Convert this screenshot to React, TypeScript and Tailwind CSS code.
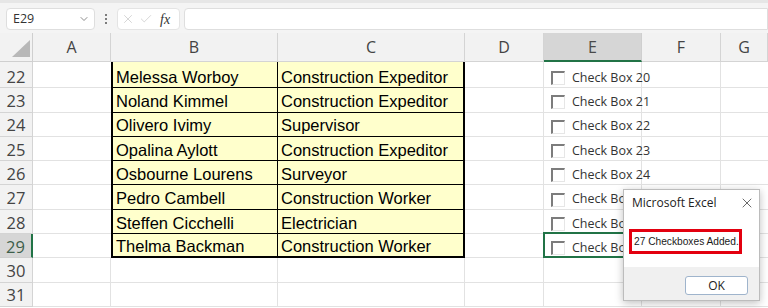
import { ChevronDown, X, Check } from 'lucide-react'

type Row = { n: number; name?: string; role?: string; cb?: string }

const rows: Row[] = [
  { n: 22, name: 'Melessa Worboy', role: 'Construction Expeditor', cb: 'Check Box 20' },
  { n: 23, name: 'Noland Kimmel', role: 'Construction Expeditor', cb: 'Check Box 21' },
  { n: 24, name: 'Olivero Ivimy', role: 'Supervisor', cb: 'Check Box 22' },
  { n: 25, name: 'Opalina Aylott', role: 'Construction Expeditor', cb: 'Check Box 23' },
  { n: 26, name: 'Osbourne Lourens', role: 'Surveyor', cb: 'Check Box 24' },
  { n: 27, name: 'Pedro Cambell', role: 'Construction Worker', cb: 'Check Box 25' },
  { n: 28, name: 'Steffen Cicchelli', role: 'Electrician', cb: 'Check Box 26' },
  { n: 29, name: 'Thelma Backman', role: 'Construction Worker', cb: 'Check Box 27' },
  { n: 30 },
  { n: 31 },
]

const cols = [
  { key: 'A', w: 'w-[78px]' },
  { key: 'B', w: 'w-[167px]' },
  { key: 'C', w: 'w-[187px]' },
  { key: 'D', w: 'w-[79px]' },
  { key: 'E', w: 'w-[98px]' },
  { key: 'F', w: 'w-[79px]' },
  { key: 'G', w: 'w-[47px]' },
]

function FormulaBar() {
  return (
    <div className="flex h-[33px] items-center gap-[4px] border-t-[3px] border-[#e6e6e6] bg-[#f4f4f4] pl-[6px] pt-[2px] font-['Open_Sans',sans-serif]">
      <div className="flex h-[22px] w-[89px] items-center justify-between rounded-[4px] border border-[#dedede] bg-white pl-[6px] pr-[4px] text-[12.5px] text-[#333]">
        <span>E29</span>
        <ChevronDown size={12} strokeWidth={1.5} className="text-[#666]" />
      </div>
      <div className="flex w-[14px] flex-col items-center gap-[2px]">
        <span className="h-[2px] w-[2px] rounded-full bg-[#555]" />
        <span className="h-[2px] w-[2px] rounded-full bg-[#555]" />
        <span className="h-[2px] w-[2px] rounded-full bg-[#555]" />
      </div>
      <div className="flex h-[22px] w-[63px] items-center gap-[4px] rounded-[4px] border border-[#e4e4e4] bg-white px-[3px]">
        <X size={14} strokeWidth={1.2} className="text-[#c4c4c4]" />
        <Check size={14} strokeWidth={1.2} className="text-[#c4c4c4]" />
        <span className="ml-[3px] font-['Liberation_Serif',serif] text-[14px] italic text-[#333]">fx</span>
      </div>
      <div className="h-[22px] flex-1 rounded-l-[4px] border border-[#dedede] bg-white" />
    </div>
  )
}

function CheckBoxCell({ label }: { label: string }) {
  return (
    <div className="flex items-center gap-[7px] whitespace-nowrap pl-[7px] font-['Open_Sans',sans-serif] text-[12.5px] text-[#333]">
      <span className="h-[14px] w-[14px] shrink-0 border-l-2 border-t-2 border-b border-r border-l-[#7c7c7c] border-t-[#7c7c7c] border-b-[#e6e6e6] border-r-[#e6e6e6] bg-white" />
      <span>{label}</span>
    </div>
  )
}

function HeaderRow() {
  return (
    <div className="flex h-[29px] font-['Open_Sans',sans-serif] text-[16px] text-[#444]">
      <div className="relative w-[33px] shrink-0 border-b border-r border-[#cfcfcf] bg-[#f2f2f2]">
        <svg className="absolute left-[12px] top-[7px]" width="18" height="17" viewBox="0 0 18 17">
          <polygon points="18,0 18,17 0,17" fill="#b8b8b8" />
        </svg>
      </div>
      {cols.map((c) => (
        <div
          key={c.key}
          className={
            c.key === 'E'
              ? `${c.w} flex shrink-0 items-center justify-center border-b-2 border-r border-b-[#217346] border-r-[#cfcfcf] bg-[#d6d6d6] text-[#4a4a4a]`
              : `${c.w} flex shrink-0 items-center justify-center border-b border-r border-[#d4d4d4] bg-[#f2f2f2]`
          }
        >
          {c.key}
        </div>
      ))}
    </div>
  )
}

// sliver of row 21 peeking out under the header
function PartialRow() {
  return (
    <div className="flex h-[2px]">
      <div className="w-[33px] shrink-0 border-r border-[#d4d4d4] bg-[#f2f2f2]" />
      <div className="w-[78px] shrink-0" />
      <div className="w-[167px] shrink-0 border-l-2 border-r border-black bg-[#ffffcc]" />
      <div className="w-[187px] shrink-0 border-r-2 border-black bg-[#ffffcc]" />
      <div className="w-[79px] shrink-0 border-r border-[#e2e2e2]" />
      <div className="w-[98px] shrink-0 border-r border-[#e2e2e2]" />
      <div className="w-[79px] shrink-0 border-r border-[#e2e2e2]" />
    </div>
  )
}

function DataRow({ row }: { row: Row }) {
  const selected = row.n === 29
  const last = row.n === 29
  const inTable = !!row.name
  const cellText = "font-['Liberation_Sans',Arial,sans-serif] text-[16.5px] text-black pt-[3px]"
  return (
    <div className="flex h-[24.3px]">
      <div
        className={
          selected
            ? "flex w-[33px] shrink-0 items-center justify-center border-b border-r-2 border-b-[#cfcfcf] border-r-[#217346] bg-[#d6d6d6] pt-[3px] font-['Open_Sans',sans-serif] text-[16.5px] text-[#3d5e4a]"
            : "flex w-[33px] shrink-0 items-center justify-center border-b border-r border-[#d4d4d4] bg-[#f2f2f2] pt-[3px] font-['Open_Sans',sans-serif] text-[16.5px] text-[#444]"
        }
      >
        {row.n}
      </div>
      <div className={`w-[78px] shrink-0 border-b border-[#e2e2e2] ${inTable ? '' : 'border-r'}`} />
      {inTable ? (
        <>
          <div
            className={`flex w-[167px] shrink-0 items-center whitespace-nowrap border-l-2 border-r border-black bg-[#ffffcc] pl-[3px] ${last ? 'border-b-2' : 'border-b'} ${cellText}`}
          >
            {row.name}
          </div>
          <div
            className={`flex w-[187px] shrink-0 items-center whitespace-nowrap border-r-2 border-black bg-[#ffffcc] pl-[3px] ${last ? 'border-b-2' : 'border-b'} ${cellText}`}
          >
            {row.role}
          </div>
        </>
      ) : (
        <>
          <div className="w-[167px] shrink-0 border-b border-r border-[#e2e2e2]" />
          <div className="w-[187px] shrink-0 border-b border-r border-[#e2e2e2]" />
        </>
      )}
      <div className="w-[79px] shrink-0 border-b border-r border-[#e2e2e2]" />
      <div className="relative flex w-[98px] shrink-0 items-center border-b border-r border-[#e2e2e2] pt-[5px]">
        {row.cb && <CheckBoxCell label={row.cb} />}
        {selected && <div className="absolute -left-px -top-[2px] bottom-[-1px] right-[-1px] border-2 border-[#217346]" />}
      </div>
      <div className="w-[79px] shrink-0 border-b border-r border-[#e2e2e2]" />
      <div className="w-[47px] shrink-0 border-b border-[#e2e2e2]" />
    </div>
  )
}

function Dialog() {
  return (
    <div className="absolute left-[623px] top-[189px] flex h-[112px] w-[137px] flex-col border border-[#bcbcbc] bg-white font-['Open_Sans',sans-serif] shadow-[0_2px_8px_rgba(0,0,0,0.25)]">
      <div className="flex h-[26px] shrink-0 items-center justify-between pl-[8px] pr-[4px] text-[12px] text-[#222]">
        <span>Microsoft Excel</span>
        <X size={16} strokeWidth={1.1} className="text-[#333]" />
      </div>
      <div className="flex flex-1 items-center pl-[5px]">
        <div className="flex h-[25px] w-[113px] items-center whitespace-nowrap border-[3px] border-[#e3000f] pl-[2px] font-['Liberation_Sans',Arial,sans-serif] text-[10.2px] text-[#1a1a1a]">
          27 Checkboxes Added.
        </div>
      </div>
      <div className="flex h-[33px] shrink-0 items-start justify-end bg-[#f0f0f0] pr-[11px] pt-[9px]">
        <div className="flex h-[19px] w-[63px] items-center justify-center rounded-[3px] border border-[#9fb4cc] bg-white text-[12px] text-[#222]">
          OK
        </div>
      </div>
    </div>
  )
}

export default function App() {
  return (
    <div className="relative h-[308px] w-[768px] overflow-hidden bg-white">
      <FormulaBar />
      <HeaderRow />
      <PartialRow />
      {rows.map((r) => (
        <DataRow key={r.n} row={r} />
      ))}
      <Dialog />
    </div>
  )
}
